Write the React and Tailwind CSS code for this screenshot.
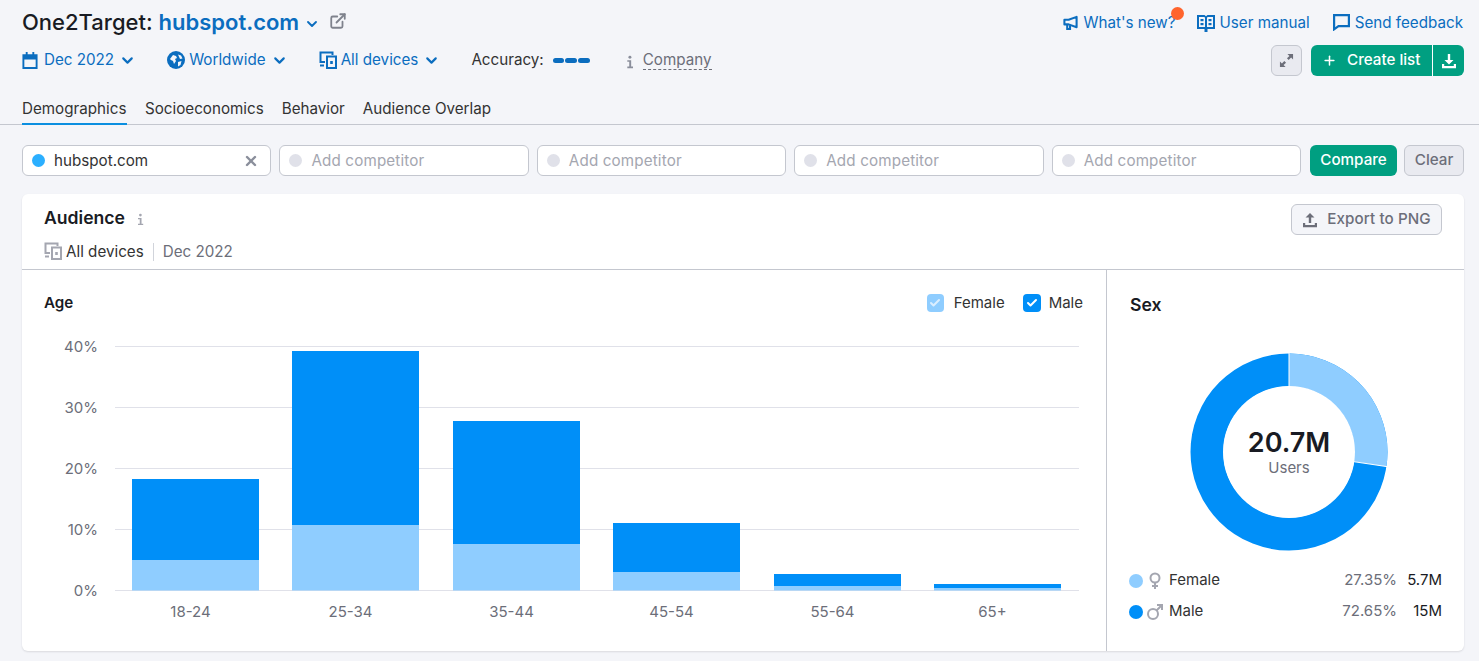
import { ChevronDown, ExternalLink, Plus, X, Check } from "lucide-react";

const bars = [
  { label: "18-24", x: 110, top: 209, split: 290 },
  { label: "25-34", x: 270, top: 81, split: 255 },
  { label: "35-44", x: 431, top: 151, split: 274 },
  { label: "45-54", x: 591, top: 253, split: 302 },
  { label: "55-64", x: 752, top: 304, split: 316 },
  { label: "65+", x: 912, top: 314, split: 318 },
];

const ticks = [
  { label: "40%", y: 76.5 },
  { label: "30%", y: 137.5 },
  { label: "20%", y: 198.5 },
  { label: "10%", y: 259.5 },
  { label: "0%", y: 320.5 },
];

function DevicesIcon({ className }) {
  return (
    <svg viewBox="0 0 18 18" className={className} fill="none" stroke="currentColor" strokeWidth="2">
      <path d="M6 11H1.5V1.5h12V4" />
      <path d="M1 14.5h4" />
      <rect x="8" y="5.5" width="9" height="11.5" />
      <path d="M12.5 10v3" strokeWidth="2.6" />
    </svg>
  );
}

function InfoIcon({ className }) {
  return (
    <svg viewBox="0 0 10 16" className={className} fill="currentColor">
      <circle cx="5.5" cy="2.5" r="1.7" />
      <path d="M2.5 6h4.4v7.2H9V15H2.5v-1.8h2.2V7.8H2.5z" />
    </svg>
  );
}

function CalendarIcon({ className }) {
  return (
    <svg viewBox="0 0 16 18" className={className} fill="currentColor">
      <path d="M3.5 0h2v2.5h5V0h2v2.5H16V18H0V2.5h3.5zM2 8v8h12V8z" />
    </svg>
  );
}

function GlobeIcon({ className }) {
  return (
    <svg viewBox="0 0 18 18" className={className}>
      <circle cx="9" cy="9" r="9" fill="currentColor" />
      <path d="M3 8l3-4 3 1 1 2-2 1 1 2-2 3-1-3-2-1zM11 3.5l3 1 1.5 3-2.5.5zM11 11l3.5-1-1 4-2.5 1.5z" fill="#f4f5f9" />
    </svg>
  );
}

function MegaphoneIcon({ className }) {
  return (
    <svg viewBox="0 0 16 16" className={className} fill="none" stroke="currentColor" strokeWidth="2.2">
      <path d="M14.5 2L6 5H1.5v5H6l8.5 3z" strokeLinejoin="round" />
      <path d="M4.5 10v5H7.5v-4" />
    </svg>
  );
}

function BookIcon({ className }) {
  return (
    <svg viewBox="0 0 18 18" className={className}>
      <path d="M0 1h7.5L9 2.2 10.5 1H18v14h-7.5V18h-3v-3H0zM2 3v10h6V3.5L7 3zM16 3h-5l-1 .5V13h6z" fill="currentColor" fillRule="evenodd" />
      <rect x="3.5" y="5" width="3" height="2.2" fill="currentColor" />
      <rect x="3.5" y="9" width="3" height="2.2" fill="currentColor" />
      <rect x="11.5" y="5" width="3" height="2.2" fill="currentColor" />
      <rect x="11.5" y="9" width="3" height="2.2" fill="currentColor" />
    </svg>
  );
}

function BubbleIcon({ className }) {
  return (
    <svg viewBox="0 0 17 17" className={className} fill="none" stroke="currentColor" strokeWidth="2.2">
      <path d="M1.1 1.1h14.8v11H5.5l-4.4 3.2z" />
    </svg>
  );
}

function ExpandIcon({ className }) {
  return (
    <svg viewBox="0 0 16 16" className={className} fill="currentColor">
      <path d="M9 1h6v6l-2.1-2.1-2.6 2.6-1.8-1.8 2.6-2.6zM7 15H1V9l2.1 2.1 2.6-2.6 1.8 1.8-2.6 2.6z" />
    </svg>
  );
}

function TrayArrow({ className, up }) {
  return (
    <svg viewBox="0 0 16 16" className={className} fill="currentColor">
      {up ? (
        <path d="M8 1l4.5 4.5H9.2V11H6.8V5.5H3.5z" />
      ) : (
        <path d="M6.8 1h2.4v6h3.3L8 11.5 3.5 7h3.3z" />
      )}
      <path d="M1 11h2.2v2h9.6v-2H15v4.2H1z" />
    </svg>
  );
}

function FilterLink({ icon, label, className }) {
  return (
    <button className={`flex items-center text-[#0b6dbf] text-[15.2px] ${className}`}>
      {icon}
      <span>{label}</span>
      <ChevronDown className="w-[17px] h-[17px] ml-[5px] mt-px" strokeWidth={3} />
    </button>
  );
}

function Competitor({ name }) {
  return (
    <div className="flex-1 h-[31px] flex items-center bg-white border border-[#c4c7cf] rounded-md pl-[9px] pr-[11px]">
      <span className={`w-[13px] h-[13px] rounded-full ${name ? "bg-[#2bafff]" : "bg-[#e0e1e9]"}`} />
      <span className={`ml-[9px] text-[15.2px] pt-px ${name ? "text-[#333]" : "text-[#a4a6b0] tracking-[0.15px]"}`}>{name || "Add competitor"}</span>
      {name && <X className="w-[16px] h-[16px] ml-auto text-[#8a8e9b]" strokeWidth={3.6} />}
    </div>
  );
}

function Legend({ color, label, check, boxClass, labelClass }) {
  return (
    <div className="flex items-center">
      <span className={`rounded flex items-center justify-center ${color} ${boxClass}`}>
        <Check className={`w-3 h-3 ${check}`} strokeWidth={4} />
      </span>
      <span className={`text-[15px] text-[#333] ${labelClass}`}>{label}</span>
    </div>
  );
}

function SexRow({ dot, symbol, label, pct, total }) {
  return (
    <div className="flex items-center h-[31px] text-[15px]">
      <span className={`w-[14px] h-[14px] rounded-full ${dot}`} />
      <svg viewBox="0 0 18 18" className="w-[18px] h-[18px] ml-[3px] text-[#a4a6b0]" fill="none" stroke="currentColor" strokeWidth="2">
        {symbol === "f" ? (
          <>
            <circle cx="9" cy="6" r="4.5" />
            <path d="M9 10.5V17M6 14h6" />
          </>
        ) : (
          <>
            <circle cx="7" cy="11" r="5" />
            <path d="M10.5 7.5L16 2M11 2h5v5" />
          </>
        )}
      </svg>
      <span className="ml-[5px] text-[#333]">{label}</span>
      <span className="ml-auto text-[#6c6e79]">{pct}</span>
      <span className="w-[45px] text-right text-[#191b23]">{total}</span>
    </div>
  );
}

export default function App() {
  return (
    <div className="h-[661px] overflow-hidden bg-[#f4f5f9] font-['Inter',sans-serif] text-[#191b23]">
      <header className="h-[125px] border-b border-[#c4c7cf] pl-[22px] pr-[15px] pt-[8px] flex flex-col">
        <div className="flex items-center justify-between h-[28px]">
          <div className="flex items-center">
            <h1 className="text-[22px] font-medium leading-7">
              One2Target: <span className="text-[#0b6dbf] font-semibold">hubspot.com</span>
            </h1>
            <ChevronDown className="w-4 h-4 ml-[5px] mt-[3px] text-[#0b6dbf]" strokeWidth={2.8} />
            <ExternalLink className="w-[18px] h-[18px] ml-[9px] -mt-[2px] text-[#7f828d]" strokeWidth={2.4} />
          </div>
          <div className="flex items-center text-[15.2px] text-[#0b6dbf] mt-[2px] pr-px">
            <div className="relative flex items-center">
              <MegaphoneIcon className="w-[15px] h-[15px] mr-[5px]" />
              <span>What's new?</span>
              <span className="absolute -top-[5px] -right-[8px] w-[13px] h-[13px] rounded-full bg-[#ff642d]" />
            </div>
            <div className="flex items-center ml-[21px]">
              <BookIcon className="w-[18px] h-[18px] mr-[5px]" />
              <span>User manual</span>
            </div>
            <div className="flex items-center ml-[23px]">
              <BubbleIcon className="w-[17px] h-[17px] mr-[5px]" />
              <span>Send feedback</span>
            </div>
          </div>
        </div>

        <div className="flex items-center justify-between mt-[9px] h-[31px]">
          <div className="flex items-center">
            <FilterLink icon={<CalendarIcon className="w-[16px] h-[17px] mr-[6px]" />} label="Dec 2022" />
            <FilterLink className="ml-[31px]" icon={<GlobeIcon className="w-[18px] h-[18px] mr-[4px]" />} label="Worldwide" />
            <FilterLink className="ml-[31px]" icon={<DevicesIcon className="w-[18px] h-[18px] mr-[4px]" />} label="All devices" />
            <span className="ml-[31px] text-[15.2px] text-[#333]">Accuracy:</span>
            <span className="flex gap-px ml-[9px]">
              <i className="w-[11px] h-[5px] rounded-sm bg-[#0b6dbf]" />
              <i className="w-[12px] h-[5px] rounded-sm bg-[#0b6dbf]" />
              <i className="w-[12px] h-[5px] rounded-sm bg-[#0b6dbf]" />
            </span>
            <InfoIcon className="w-[9px] h-[14px] ml-[35px] mt-[3px] text-[#8a8e9b]" />
            <span className="ml-[9px] text-[15.2px] text-[#6c6e79] border-b border-dashed border-[#6c6e79] leading-[18px]">Company</span>
          </div>
          <div className="flex items-center">
            <button className="w-[31px] h-[31px] flex items-center justify-center bg-[#e9eaf0] border border-[#c4c7cf] rounded-md">
              <ExpandIcon className="w-[15px] h-[15px] text-[#6c6e79]" />
            </button>
            <div className="ml-[9px] flex h-[31px] rounded-md overflow-hidden bg-[#009f81] text-white text-[15.2px] font-medium">
              <button className="w-[121px] flex items-center pl-[11px]">
                <Plus className="w-[15px] h-[15px]" strokeWidth={2.4} />
                <span className="ml-[10px]">Create list</span>
              </button>
              <button className="w-[32px] flex items-center justify-center border-l border-white">
                <TrayArrow className="w-4 h-4" />
              </button>
            </div>
          </div>
        </div>

        <nav className="flex mt-[17px] text-[15.2px] text-[#333] gap-[18px] h-[32px]">
          <a className="w-[105px] border-b-2 border-[#0b8fe0] h-[32px] leading-[29px] pt-[1px] whitespace-nowrap">Demographics</a>
          <a className="leading-[29px] pt-[1px]">Socioeconomics</a>
          <a className="leading-[29px] pt-[1px]">Behavior</a>
          <a className="leading-[29px] pt-[1px]">Audience Overlap</a>
        </nav>
      </header>

      <div className="flex items-center gap-2 pl-[22px] pr-[15px] mt-5">
        <Competitor name="hubspot.com" />
        <Competitor />
        <Competitor />
        <Competitor />
        <Competitor />
        <button className="ml-px w-[87px] h-[31px] rounded-md bg-[#009f81] text-white text-[15.2px] font-medium">Compare</button>
        <button className="-ml-px w-[60px] h-[31px] rounded-md bg-[#e9eaf0] border border-[#c4c7cf] text-[#6c6e79] text-[15.2px] font-medium">Clear</button>
      </div>

      <section className="ml-[22px] mr-[15px] mt-[18px] h-[457px] bg-white rounded-md shadow-[0_1px_2px_rgba(25,27,35,0.12)] flex flex-col">
        <div className="h-[76px] border-b border-[#c4c7cf] px-[22px] pt-[11px] flex justify-between shrink-0">
          <div>
            <div className="flex items-center h-[26px]">
              <h2 className="text-[17.6px] font-semibold">Audience</h2>
              <InfoIcon className="w-[8px] h-[13px] ml-[11px] mt-[2px] text-[#a4a6b0]" />
            </div>
            <div className="flex items-center mt-[10px] text-[15.2px]">
              <DevicesIcon className="w-[18px] h-[18px] text-[#a4a6b0] mr-1 -mt-[2px]" />
              <span className="text-[#333]">All devices</span>
              <span className="w-px h-[18px] bg-[#d1d4db] ml-[9px] mr-[9px]" />
              <span className="text-[#6c6e79]">Dec 2022</span>
            </div>
          </div>
          <button className="w-[151px] h-[31px] -mt-[1px] flex items-center justify-center bg-[#f4f5f9] border border-[#c4c7cf] rounded-md text-[#6c6e79] text-[15.2px] font-medium tracking-[0.1px]">
            <TrayArrow up className="w-4 h-4 mr-[9px]" />
            Export to PNG
          </button>
        </div>

        <div className="flex flex-1">
          <div className="w-[1085px] border-r border-[#c4c7cf] relative">
            <div className="flex items-center justify-between pl-[22px] pr-[23px] pt-[22px] h-[44px]">
              <h3 className="text-[15.2px] font-semibold">Age</h3>
              <div className="flex gap-[18px]">
                <Legend color="bg-[#8fcdff]" label="Female" check="text-[#dbeeff]" boxClass="w-[17px] h-[18px]" labelClass="ml-[10px]" />
                <Legend color="bg-[#008ff8]" label="Male" check="text-white" boxClass="w-[18px] h-[18px]" labelClass="ml-2" />
              </div>
            </div>
            <svg width="1084" height="336" className="absolute left-0 top-0 pointer-events-none overflow-visible">
              {ticks.map((t) => (
                <g key={t.label}>
                  <line x1="93" x2="1057" y1={t.y} y2={t.y} stroke="#e0e1e9" />
                  <text x="76" y={t.y + 5.5} textAnchor="end" fontSize="15" fill="#6c6e79" fontFamily="Inter">{t.label}</text>
                </g>
              ))}
              {bars.map((b) => (
                <g key={b.label}>
                  <rect x={b.x} y={b.top} width="127" height={b.split - b.top} fill="#008ff8" />
                  <rect x={b.x} y={b.split} width="127" height={320.5 - b.split} fill="#8fcdff" />
                  <text x={b.x + 58.5} y="347" textAnchor="middle" fontSize="15" fill="#6c6e79" fontFamily="Inter">{b.label}</text>
                </g>
              ))}
            </svg>
          </div>

          <div className="flex-1 pl-[23px] pr-[22px] pt-[24px] flex flex-col">
            <h3 className="text-[17.6px] font-semibold leading-[22px]">Sex</h3>
            <div className="relative w-[200px] h-[200px] ml-[59px] mt-[36px] shrink-0">
              <svg viewBox="0 0 200 200" className="w-full h-full -rotate-90">
                <circle cx="100" cy="100" r="82" fill="none" stroke="#008ff8" strokeWidth="33" />
                <circle cx="100" cy="100" r="82" fill="none" stroke="#8fcdff" strokeWidth="33" pathLength="100" strokeDasharray="27.35 72.65" />
                <line x1="100" y1="100" x2="200" y2="100" stroke="white" strokeWidth="1" />
                <line x1="100" y1="100" x2="200" y2="100" stroke="white" strokeWidth="1" transform="rotate(98.5 100 100)" />
                <circle cx="100" cy="100" r="66" fill="white" />
              </svg>
              <div className="absolute inset-0 flex flex-col items-center justify-center">
                <span className="text-[27px] font-semibold leading-8">20.7M</span>
                <span className="text-[15px] text-[#6c6e79] leading-5 -mt-px">Users</span>
              </div>
            </div>
            <div className="mt-[13px] -ml-px">
              <SexRow dot="bg-[#8fcdff]" symbol="f" label="Female" pct="27.35%" total="5.7M" />
              <SexRow dot="bg-[#008ff8]" symbol="m" label="Male" pct="72.65%" total="15M" />
            </div>
          </div>
        </div>
      </section>
    </div>
  );
}
